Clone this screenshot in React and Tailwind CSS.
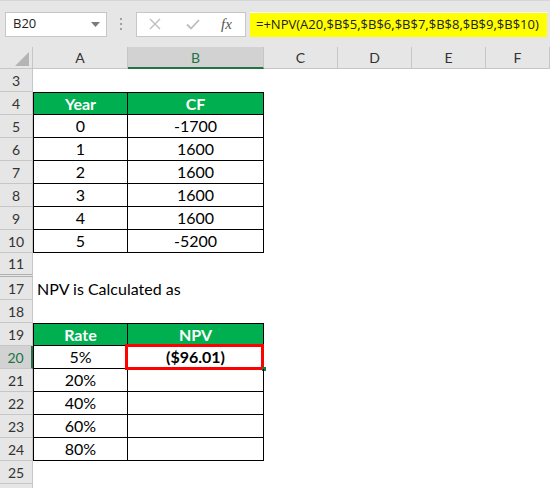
import React from 'react';

const cellFont = { fontFamily: 'Lato, "Open Sans", sans-serif' };
const uiFont = { fontFamily: '"Open Sans", "Noto Sans", sans-serif' };

// sheet rows as they appear (rows 12-16 are hidden)
const rows = [
  { n: 3 },
  { n: 4, head: ['Year', 'CF'], top: true },
  { n: 5, a: '0', b: '-1700' },
  { n: 6, a: '1', b: '1600' },
  { n: 7, a: '2', b: '1600' },
  { n: 8, a: '3', b: '1600' },
  { n: 9, a: '4', b: '1600' },
  { n: 10, a: '5', b: '-5200' },
  { n: 11, hidden: true },
  { n: 17, text: 'NPV is Calculated as' },
  { n: 18 },
  { n: 19, head: ['Rate', 'NPV'], top: true },
  { n: 20, a: '5%', b: '($96.01)', sel: true },
  { n: 21, a: '20%', b: '' },
  { n: 22, a: '40%', b: '' },
  { n: 23, a: '60%', b: '' },
  { n: 24, a: '80%', b: '' },
  { n: 25 },
  { n: 26, blank: true },
];

function Toolbar() {
  return (
    <div className="flex h-[47px] items-center bg-[#e6e6e6] border-t border-[#d6d6d6]" style={uiFont}>
      <div className="ml-[5px] flex h-[25px] w-[102px] items-center justify-between border border-[#c6c6c6] bg-white pl-[7px] pr-[6px]">
        <span className="text-[13px] text-[#222]">B20</span>
        <svg width="9" height="5" viewBox="0 0 9 5"><path d="M0 0h9L4.5 5z" fill="#7a7a7a" /></svg>
      </div>
      <div className="ml-[13px] flex w-[3px] flex-col gap-[3px]">
        <div className="h-[2px] w-[2px] bg-[#a0a0a0]" />
        <div className="h-[2px] w-[2px] bg-[#a0a0a0]" />
        <div className="h-[2px] w-[2px] bg-[#a0a0a0]" />
      </div>
      <div className="ml-[13px] flex h-[25px] w-[110px] items-center border border-[#c6c6c6] bg-white">
        <svg className="ml-[12px]" width="12" height="12" viewBox="0 0 12 12">
          <path d="M1 1l10 10M11 1L1 11" stroke="#bdbdbd" strokeWidth="1.4" />
        </svg>
        <svg className="ml-[25px]" width="14" height="11" viewBox="0 0 14 11">
          <path d="M1 5.5l4 4L13 1" stroke="#bdbdbd" strokeWidth="1.8" fill="none" />
        </svg>
        <span className="ml-[21px] text-[15px] italic text-[#555]" style={{ fontFamily: '"Liberation Serif", serif' }}>fx</span>
      </div>
      <div className="ml-[4px] flex h-[25px] w-[297px] items-center border-t border-white bg-[#ffff00] pl-[6px]">
        <span className="text-[13px] text-[#222] whitespace-nowrap">=+NPV(A20,$B$5,$B$6,$B$7,$B$8,$B$9,$B$10)</span>
      </div>
    </div>
  );
}

function ColumnHeader() {
  const cols = [
    { l: 'A', w: 'w-[95px]' },
    { l: 'B', w: 'w-[136px]', sel: true },
    { l: 'C', w: 'w-[74px]' },
    { l: 'D', w: 'w-[74px]' },
    { l: 'E', w: 'w-[74px]' },
    { l: 'F', w: 'flex-1' },
  ];
  return (
    <div className="flex h-[22px] bg-[#e6e6e6] text-[14px] text-[#333]" style={cellFont}>
      <div className="relative w-[33px] border-r border-b border-[#c6c6c6]">
        <svg className="absolute left-[15px] top-[5px]" width="14" height="14" viewBox="0 0 14 14">
          <path d="M14 0v14H0z" fill="#b4b4b4" />
        </svg>
      </div>
      {cols.map((c) => (
        <div
          key={c.l}
          className={
            c.sel
              ? `${c.w} flex items-center justify-center border-r border-[#c6c6c6] border-b-2 border-b-[#217346] bg-[#d2d2d2] text-[#217346]`
              : `${c.w} flex items-center justify-center border-r border-b border-[#c6c6c6]`
          }
        >
          {c.l}
        </div>
      ))}
    </div>
  );
}

function Row({ r }) {
  const h = r.hidden ? 'h-[24px]' : 'h-[23px]';
  const header = r.sel
    ? 'border-r-2 border-r-[#217346] bg-[#d2d2d2] text-[#217346]'
    : 'border-r border-[#c6c6c6] bg-[#e6e6e6] text-[#333]';
  const bottom = r.hidden ? 'border-b-[3px] border-double border-b-[#b0b0b0]' : 'border-b border-b-[#c6c6c6]';
  const inTable = r.head || r.a !== undefined;

  return (
    <div className={`flex ${h}`} style={cellFont}>
      <div className={`flex w-[33px] shrink-0 items-center justify-center text-[14px] ${header} ${bottom}`}>
        {r.blank ? '' : r.n}
      </div>
      {inTable ? (
        <>
          <div
            className={`flex w-[95px] items-center justify-center border-l border-r border-b border-black text-[16px] ${r.top ? 'border-t' : ''} ${r.head ? 'bg-[#00b050] font-bold text-white' : 'text-black'}`}
          >
            {r.head ? r.head[0] : r.a}
          </div>
          <div
            className={`relative flex w-[136px] items-center justify-center border-r border-b border-black text-[16px] ${r.top ? 'border-t' : ''} ${r.head ? 'bg-[#00b050] font-bold text-white' : 'text-black'} ${r.sel ? 'font-bold' : ''}`}
          >
            {r.head ? r.head[1] : r.b}
            {r.sel && (
              <>
                <div className="absolute -left-[3px] -top-[2px] -right-[1px] -bottom-[2px] border-[3px] border-[#ff0000]" />
                <div className="absolute -right-[3px] -bottom-[3px] h-[4px] w-[4px] bg-[#217346]" />
              </>
            )}
          </div>
          <div className="flex-1 bg-white" />
        </>
      ) : (
        <div className="flex flex-1 items-center bg-white pl-[4px] text-[16px] text-black">{r.text}</div>
      )}
    </div>
  );
}

export default function App() {
  return (
    <div className="h-[488px] w-[550px] overflow-hidden bg-white">
      <Toolbar />
      <ColumnHeader />
      {rows.map((r) => (
        <Row key={r.n} r={r} />
      ))}
    </div>
  );
}
